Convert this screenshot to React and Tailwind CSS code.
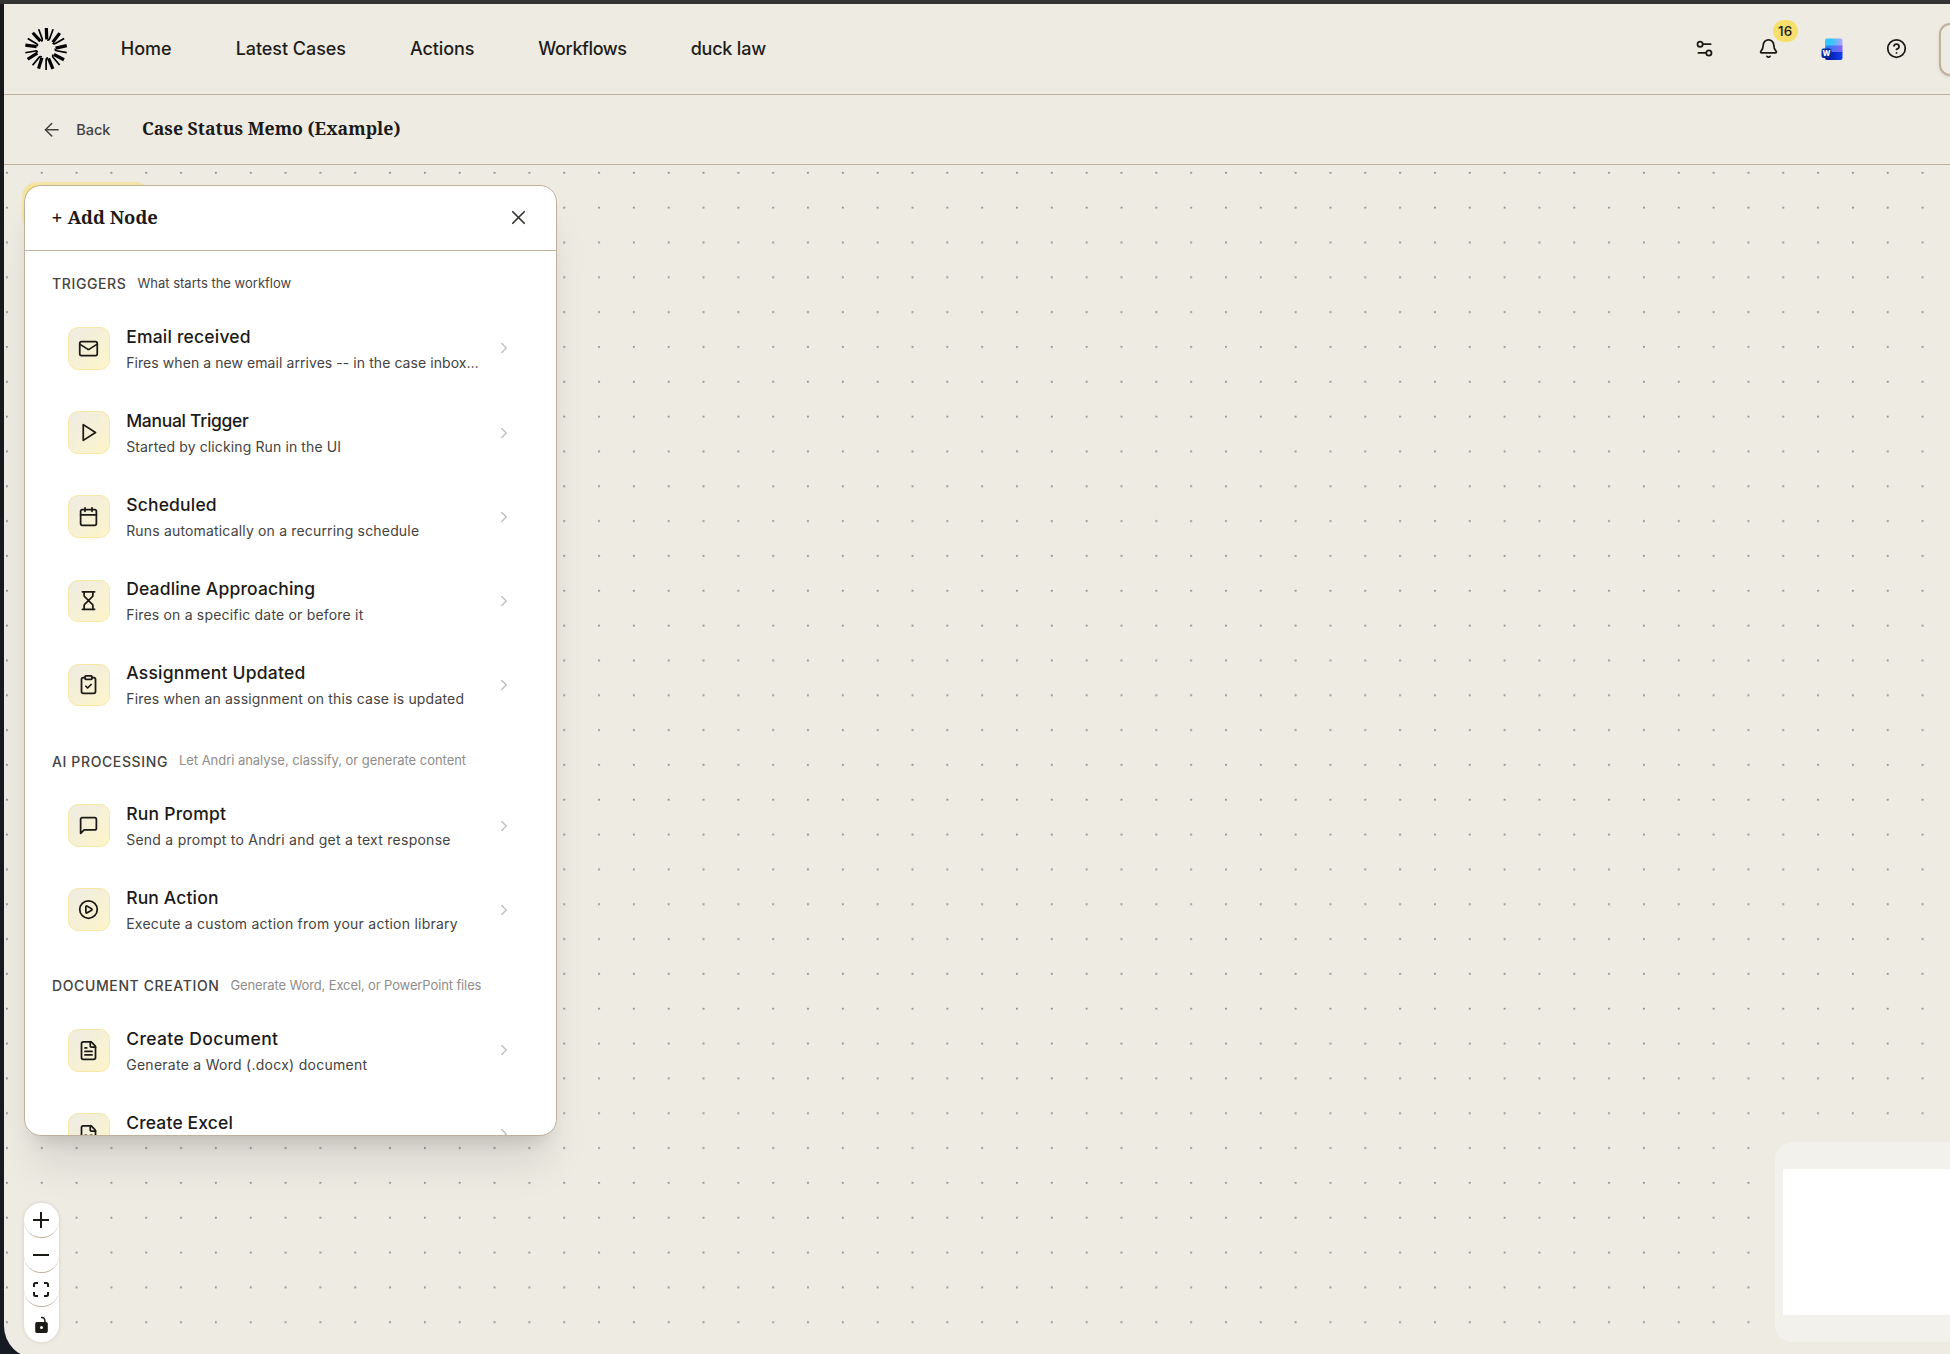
import React from "react";
import {
  ArrowLeft,
  Bell,
  Calendar,
  ChevronRight,
  CircleHelp,
  CirclePlay,
  ClipboardCheck,
  FileSpreadsheet,
  FileText,
  Hourglass,
  Mail,
  Settings2,
  X,
} from "lucide-react";

function PlayIcon({ size = 21 }) {
  return (
    <svg width={size} height={size} viewBox="0 0 24 24" fill="none" stroke="currentColor" strokeWidth="2" strokeLinecap="round" strokeLinejoin="round">
      <polygon points="6 3 20 12 6 21 6 3" />
    </svg>
  );
}

function MessageIcon({ size = 21 }) {
  return (
    <svg width={size} height={size} viewBox="0 0 24 24" fill="none" stroke="currentColor" strokeWidth="2" strokeLinecap="round" strokeLinejoin="round">
      <path d="M21 15a2 2 0 0 1-2 2H7l-4 4V5a2 2 0 0 1 2-2h14a2 2 0 0 1 2 2z" />
    </svg>
  );
}

const NAV = [
  { label: "Home", tracking: "tracking-[0px]" },
  { label: "Latest Cases", tracking: "tracking-[-0.05px]" },
  { label: "Actions", tracking: "tracking-[-0.1px]" },
  { label: "Workflows", tracking: "tracking-[-0.4px]" },
  { label: "duck law", tracking: "tracking-[-0.2px]" },
];

const SECTIONS = [
  {
    title: "TRIGGERS",
    hint: "What starts the workflow",
    hintClass: "text-[#45433f]",
    items: [
      { icon: Mail, title: "Email received", titleClass: "tracking-[0.2px]", copy: "Fires when a new email arrives -- in the case inbox…", copyClass: "tracking-[0.07px]" },
      { icon: PlayIcon, title: "Manual Trigger", titleClass: "tracking-[-0.3px]", copy: "Started by clicking Run in the UI", copyClass: "tracking-[0.12px]" },
      { icon: Calendar, title: "Scheduled", titleClass: "tracking-[0.18px]", copy: "Runs automatically on a recurring schedule", copyClass: "tracking-[0.17px]" },
      { icon: Hourglass, title: "Deadline Approaching", titleClass: "tracking-[0.17px]", copy: "Fires on a specific date or before it", copyClass: "tracking-[0.19px]" },
      { icon: ClipboardCheck, title: "Assignment Updated", titleClass: "tracking-[0.22px]", copy: "Fires when an assignment on this case is updated", copyClass: "tracking-[0.18px]" },
    ],
  },
  {
    title: "AI PROCESSING",
    hint: "Let Andri analyse, classify, or generate content",
    hintClass: "text-[#8f8d8a] tracking-[-0.04px]",
    items: [
      { icon: MessageIcon, title: "Run Prompt", titleClass: "tracking-[0.24px]", copy: "Send a prompt to Andri and get a text response", copyClass: "tracking-[0.25px]" },
      { icon: CirclePlay, title: "Run Action", titleClass: "tracking-[0.15px]", copy: "Execute a custom action from your action library", copyClass: "tracking-[0.24px]" },
    ],
  },
  {
    title: "DOCUMENT CREATION",
    hint: "Generate Word, Excel, or PowerPoint files",
    hintClass: "text-[#8f8d8a] tracking-[-0.12px]",
    items: [
      { icon: FileText, title: "Create Document", titleClass: "tracking-[0.38px]", copy: "Generate a Word (.docx) document", copyClass: "tracking-[0.27px]" },
      { icon: FileSpreadsheet, title: "Create Excel", titleClass: "tracking-[0.15px]", copy: "", copyClass: "tracking-[0.2px]" },
    ],
  },
];

const RAYS = [0, 40, 80, 120, 160, 200, 240, 280, 320];

function Logo() {
  return (
    <svg width="44" height="44" viewBox="-22 -22 44 44" fill="none" stroke="#000" aria-hidden="true">
      {RAYS.map((a) => (
        <g key={a} transform={`rotate(${a})`}>
          <path d="M0.3,-21 L0.8,-9.6" strokeWidth="3.2" />
          <path d="M7.1,-19.8 L3.6,-10.2 Q3,-8.6 1.2,-9" strokeWidth="1.7" />
        </g>
      ))}
    </svg>
  );
}

function WordIcon() {
  return (
    <svg width="22" height="22" viewBox="0 0 22 22" aria-hidden="true">
      <defs>
        <linearGradient id="wordTop" x1="0" y1="0" x2="1" y2="0">
          <stop offset="0.35" stopColor="#33c6fe" />
          <stop offset="1" stopColor="#b3a4fb" />
        </linearGradient>
        <linearGradient id="wordMid" x1="0" y1="0" x2="1" y2="0">
          <stop offset="0.2" stopColor="#2f7bf2" />
          <stop offset="1" stopColor="#8a63f6" />
        </linearGradient>
        <linearGradient id="wordLow" x1="0" y1="0" x2="1" y2="0">
          <stop offset="0.2" stopColor="#0519a0" />
          <stop offset="1" stopColor="#1440f5" />
        </linearGradient>
      </defs>
      <path d="M6,0.5 h13.5 a2,2 0 0 1 2,2 V8 H4 V2.5 a2,2 0 0 1 2,-2z" fill="url(#wordTop)" />
      <path d="M4,9.5 a2,2 0 0 1 2,-2 H21.5 V15 H4z" fill="url(#wordMid)" />
      <path d="M4,16 a2,2 0 0 1 2,-2 H21.5 V20 a2,2 0 0 1 -2,2 H6 a2,2 0 0 1 -2,-2z" fill="url(#wordLow)" />
      <rect x="0.5" y="10.5" width="10" height="9.5" rx="2" fill="#0b2a9c" />
      <text x="5.5" y="18" textAnchor="middle" fontSize="7.5" fontWeight="800" fontFamily="Inter, sans-serif" fill="#fff">W</text>
    </svg>
  );
}

function TopBar() {
  return (
    <header className="flex items-center shrink-0 h-[91px] pl-[20px] border-b border-[#c0b19d]">
      <Logo />
      <nav className="flex items-center gap-[64px] ml-[52.8px] pb-px text-[18px] font-medium text-[#1f1d1a] whitespace-nowrap">
        {NAV.map((n) => (
          <a key={n.label} className={n.tracking}>{n.label}</a>
        ))}
      </nav>
      <div className="flex items-center gap-[42.7px] ml-auto pb-px text-[#1c1a17]">
        <Settings2 size={21} />
        <div className="relative">
          <Bell size={21} />
          <span className="absolute -top-[18px] left-[15px] flex items-center justify-center w-[25px] h-[22px] rounded-full bg-[#f6df6b] text-[13.5px] font-medium">
            16
          </span>
        </div>
        <WordIcon />
        <CircleHelp size={21} />
      </div>
      <div className="w-[11px] h-[53px] ml-[32px] rounded-l-[17px] border-2 border-r-0 border-[#c0b19d] shadow-[0_1px_3px_rgba(0,0,0,0.12)]" />
    </header>
  );
}

function TitleBar() {
  return (
    <div className="flex items-center shrink-0 h-[70px] pl-[37px] border-b border-[#c0b19d]">
      <ArrowLeft size={21.5} strokeWidth={1.75} className="text-[#45433f]" />
      <span className="ml-[13.7px] text-[14.5px] font-medium text-[#45433f]">Back</span>
      <h1 className="ml-[31.5px] pb-[2px] text-[17.7px] font-bold text-[#1c1a17] font-['Noto_Serif','Liberation_Serif',serif]">
        Case Status Memo (Example)
      </h1>
    </div>
  );
}

function NodeRow({ item }) {
  return (
    <div className="flex items-center h-[84.15px] px-4">
      <div className="flex items-center justify-center shrink-0 w-[42px] h-[42.5px] pr-px rounded-[10px] border border-[#f7e8a4] bg-linear-to-br from-[#eeebe3] to-[#fef5c9] text-[#1c1a17]">
        <item.icon size={21} />
      </div>
      <div className="flex-1 ml-[16.2px] pt-[3px] whitespace-nowrap">
        <div className={`text-[17.5px] leading-[26px] font-medium text-[#1c1a17] ${item.titleClass}`}>{item.title}</div>
        <div className={`h-[26px] text-[14px] leading-[26px] text-[#45433f] ${item.copyClass}`}>{item.copy}</div>
      </div>
      <ChevronRight size={18} strokeWidth={2} className="text-[#c0c0c0]" />
    </div>
  );
}

function AddNodePanel() {
  return (
    <section className="absolute left-5 top-5 z-10 flex flex-col w-[533px] h-[951px] overflow-hidden rounded-[17px] border border-[#c0b19d] bg-white shadow-[0_35px_43px_-9px_rgba(0,0,0,0.1),0_14px_17px_-10px_rgba(0,0,0,0.13)]">
      <div className="flex items-center justify-between shrink-0 h-[65px] pl-[26px] pr-[26px] pb-[2px] border-b border-[#c0b19d]">
        <h2 className="flex items-center text-[18.4px] text-[#1c1a17] font-['Noto_Serif','Liberation_Serif',serif]">
          <span className="w-[16.5px] font-['Inter',sans-serif] text-[18px]">+</span>
          <span className="font-bold">Add Node</span>
        </h2>
        <X size={23} strokeWidth={1.75} className="text-[#35332f]" />
      </div>
      <div className="flex flex-col gap-[11.5px] pt-[10.3px] px-[27px]">
        {SECTIONS.map((s) => (
          <div key={s.title}>
            <div className="flex items-center gap-[11px] h-[45px] whitespace-nowrap">
              <h3 className="text-[14px] font-medium tracking-[0.62px] text-[#45433f]">{s.title}</h3>
              <span className={`text-[13px] ${s.hintClass}`}>{s.hint}</span>
            </div>
            {s.items.map((item) => (
              <NodeRow key={item.title} item={item} />
            ))}
          </div>
        ))}
      </div>
    </section>
  );
}

function Controls() {
  return (
    <div className="absolute left-5 top-[1038px] flex flex-col w-[35px] rounded-[17px] bg-white text-[#1c1a17] shadow-[0_0_4px_rgba(0,0,0,0.12)]">
      <button className="flex items-center justify-center h-[35px] pr-px rounded-[17px] border-b border-[#c0b19d]">
        <svg width="16" height="16" viewBox="0 0 16 16" stroke="currentColor" strokeWidth="2"><path d="M8,0V16M0,8H16" /></svg>
      </button>
      <button className="flex items-center justify-center h-[35px] pr-px rounded-[17px] border-b border-[#c0b19d]">
        <svg width="16" height="16" viewBox="0 0 16 16" stroke="currentColor" strokeWidth="2"><path d="M0,8H16" /></svg>
      </button>
      <button className="flex items-center justify-center h-[34px] pr-px rounded-[17px] border-b border-[#c0b19d]">
        <svg width="16" height="15" viewBox="0 0 16 15" fill="none" stroke="currentColor" strokeWidth="2">
          <path d="M1,5V2.5Q1,1 2.5,1H5M11,1H13.5Q15,1 15,2.5V5M15,10V12.5Q15,14 13.5,14H11M5,14H2.5Q1,14 1,12.5V10" />
        </svg>
      </button>
      <button className="flex items-center justify-center h-[35px] pr-px">
        <svg width="13" height="17" viewBox="0 0 13 17">
          <path d="M6,1.6 Q10,0.6 10,6.2" fill="none" stroke="currentColor" strokeWidth="1.5" />
          <path fillRule="evenodd" d="M2,6H11A1.8,1.8 0 0 1 12.8,7.8V15.2A1.8,1.8 0 0 1 11,17H2A1.8,1.8 0 0 1 0.2,15.2V7.8A1.8,1.8 0 0 1 2,6ZM6.5,10A1.5,1.5 0 1 0 6.5,13A1.5,1.5 0 1 0 6.5,10Z" fill="currentColor" />
        </svg>
      </button>
    </div>
  );
}

function Canvas() {
  return (
    <div className="relative flex-1 overflow-hidden">
      <svg className="absolute inset-0 w-full h-full" aria-hidden="true">
        <pattern id="dots" x="0" y="0" width="34.83" height="34.83" patternUnits="userSpaceOnUse">
          <circle cx="2.9" cy="7.8" r="1.05" fill="#8c8c96" />
        </pattern>
        <rect width="100%" height="100%" fill="url(#dots)" />
      </svg>
      {/* the "add node" button sits under the open panel */}
      <div className="absolute left-[21px] top-[20px] w-[122px] h-[44px] rounded-[12px] bg-[#f6df6b] ring-[3px] ring-[#f6df6b]/50" />
      <AddNodePanel />
      <Controls />
      <div className="absolute left-[1771px] top-[977px] w-[300px] h-[200px] rounded-[17px] bg-[#f2f1eb]">
        <div className="ml-2 mt-[27px] h-[146px] rounded-[1px] bg-white" />
      </div>
    </div>
  );
}

export default function App() {
  return (
    <div className="w-[1950px] h-[1354px] pt-1 pl-1 overflow-hidden bg-linear-to-b from-[#333333] from-[4px] via-[#18191c] via-[4px] to-[#171a22] font-['Inter',sans-serif]">
      <div className="flex flex-col h-[1354px] overflow-hidden rounded-bl-[32px] bg-[#eeebe3]">
        <TopBar />
        <TitleBar />
        <Canvas />
      </div>
    </div>
  );
}
